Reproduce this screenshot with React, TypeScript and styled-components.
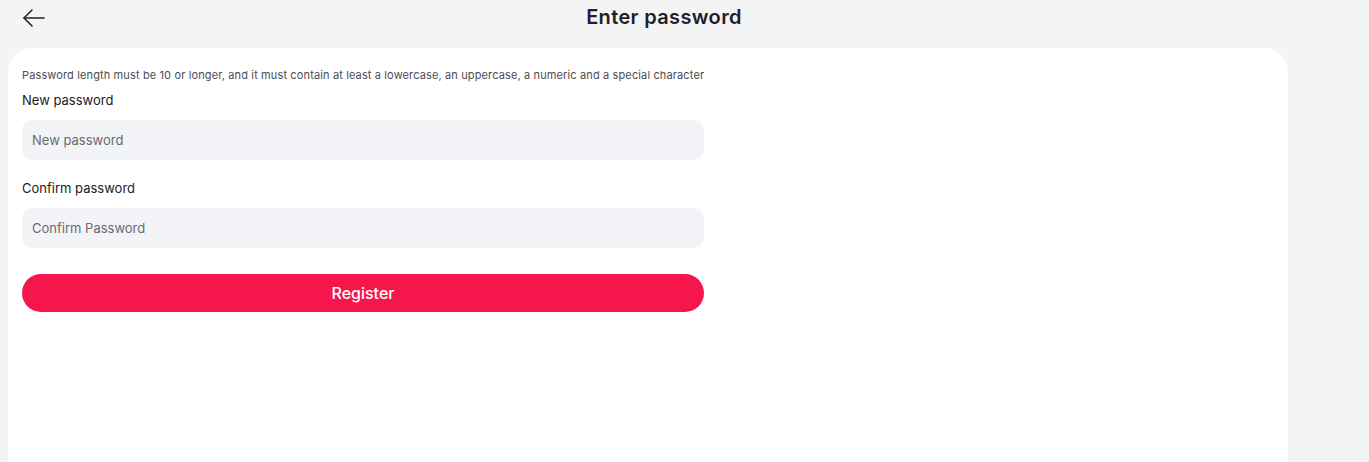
import React from "react";
import styled, { createGlobalStyle } from "styled-components";

const Global = createGlobalStyle`
  html, body { margin: 0; padding: 0; background: #f4f4f4; }
  body { font-family: Inter, "Noto Sans", sans-serif; -webkit-font-smoothing: antialiased; }
  * { box-sizing: border-box; }
`;

const Page = styled.div`
  height: 462px;
  overflow: hidden;
  background: #f4f4f4;
  padding: 0 81px 0 8px;
`;

const Header = styled.header`
  position: relative;
  height: 33px;
  display: flex;
  align-items: center;
  justify-content: center;
  margin-right: -32px;
`;

const BackButton = styled.button`
  position: absolute;
  left: 13px;
  top: 5px;
  width: 26px;
  height: 26px;
  border: none;
  background: none;
  padding: 0;
  display: flex;
  align-items: center;
  justify-content: center;
  cursor: pointer;
  color: #222;
`;

const Title = styled.h1`
  margin: 0;
  font-size: 20px;
  font-weight: 600;
  color: #1f1f2b;
  letter-spacing: 0.35px;
`;

const Card = styled.main`
  margin-top: 15px;
  background: #fff;
  border-radius: 24px 24px 0 0;
  min-height: 500px;
  padding: 20px 14px;
`;

const Form = styled.form`
  width: 682px;
  display: flex;
  flex-direction: column;
`;

const Hint = styled.p`
  margin: 0;
  font-size: 11px;
  line-height: 14px;
  color: #4c4c55;
  letter-spacing: 0.13px;
  white-space: nowrap;
`;

const Label = styled.label<{ $top: number }>`
  margin-top: ${(p) => p.$top}px;
  font-size: 13px;
  line-height: 16px;
  color: #1b1b22;
`;

const Input = styled.input`
  margin-top: 12px;
  height: 40px;
  border: none;
  outline: none;
  border-radius: 10px;
  background: #f3f4f8;
  padding: 0 10px;
  font-family: inherit;
  font-size: 13px;
  color: #222;
  &::placeholder { color: #686a72; }
`;

const Button = styled.button`
  margin-top: 26px;
  height: 38px;
  border: none;
  border-radius: 19px;
  background: #f5164c;
  color: #fff;
  font-family: inherit;
  font-size: 16px;
  font-weight: 500;
  cursor: pointer;
`;

export default function App() {
  return (
    <>
      <Global />
      <Page>
        <Header>
          <BackButton type="button" aria-label="Back">
            <svg width="24" height="24" viewBox="0 0 24 24" fill="none" stroke="#222" strokeWidth="1.6" strokeLinecap="round" strokeLinejoin="round">
              <path d="M22 12H2" />
              <path d="M10 4l-8 8 8 8" />
            </svg>
          </BackButton>
          <Title>Enter password</Title>
        </Header>
        <Card>
          <Form onSubmit={(e) => e.preventDefault()}>
            <Hint>
              Password length must be 10 or longer, and it must contain at least a lowercase, an uppercase, a numeric and a special character
            </Hint>
            <Label $top={10}>New password</Label>
            <Input type="password" placeholder="New password" />
            <Label $top={20}>Confirm password</Label>
            <Input type="password" placeholder="Confirm Password" />
            <Button type="submit">Register</Button>
          </Form>
        </Card>
      </Page>
    </>
  );
}
